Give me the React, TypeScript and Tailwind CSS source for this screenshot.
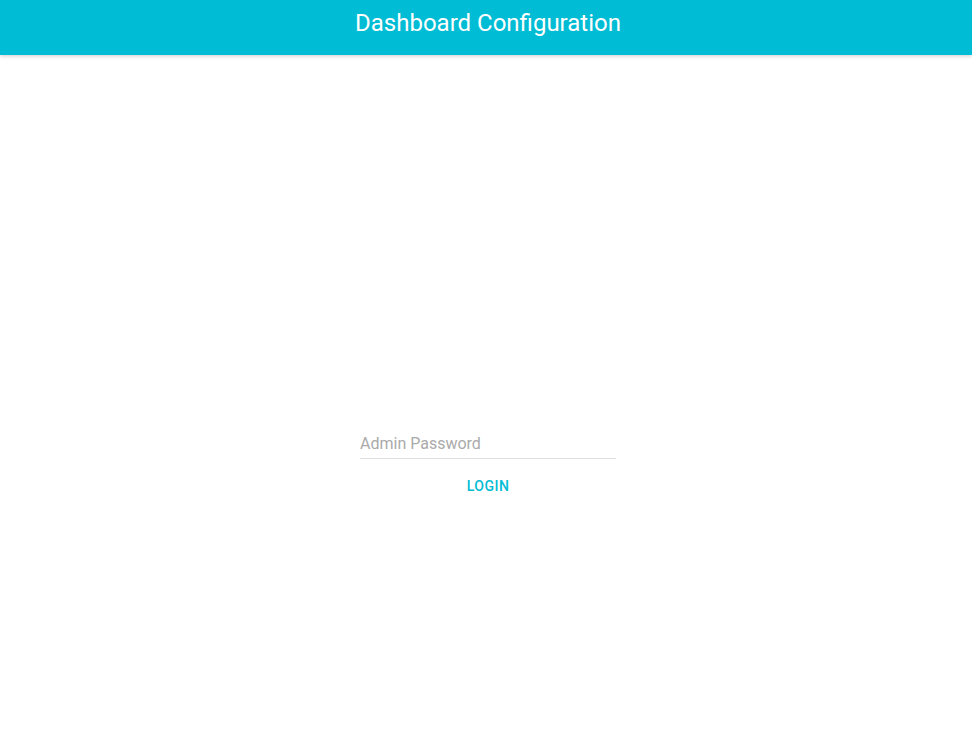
const App = () => {
  return (
    <div className="min-h-screen bg-white font-['Roboto',sans-serif]">
      <header className="h-[55px] bg-[#00bcd4] flex items-center justify-center pl-[4px] pb-[10px] shadow-[0_1px_4px_rgba(0,0,0,0.2)]">
        <h1 className="text-white text-[24px] font-normal leading-none">Dashboard Configuration</h1>
      </header>

      <main className="flex flex-col items-center pl-[4px] pt-[374px]">
        <div className="w-[256px]">
          <input
            type="password"
            placeholder="Admin Password"
            className="w-full h-[30px] border-b border-[#e0e0e0] bg-transparent text-[16px] text-[#333] placeholder:text-[#aaaaaa] outline-none"
          />
        </div>
        <button className="mt-[9px] h-9 px-4 min-w-[88px] rounded-sm text-[14px] font-medium uppercase text-[#00bcd4] tracking-[0.5px]">
          Login
        </button>
      </main>
    </div>
  );
};

export default App;
